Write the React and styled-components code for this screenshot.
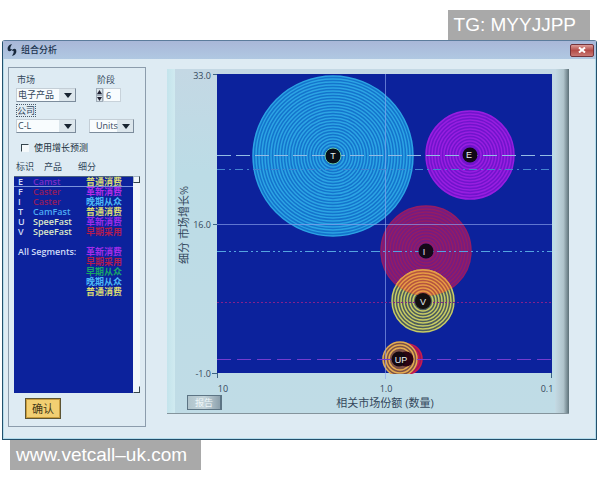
import { useState } from 'react';
import styled, { createGlobalStyle } from 'styled-components';

const sans = `'Open Sans', 'Noto Sans CJK SC', sans-serif`;

const rows = [
  { id: 'E', name: 'Camst', nameColor: '#7a2bc8', segment: '普通消费', color: '#dcdc74' },
  { id: 'F', name: 'Caster', nameColor: '#941c5c', segment: '革新消费', color: '#b42ce8' },
  { id: 'I', name: 'Caster', nameColor: '#941c5c', segment: '晚期从众', color: '#4cb8f4' },
  { id: 'T', name: 'CamFast', nameColor: '#4cacf4', segment: '普通消费', color: '#dcdc74' },
  { id: 'U', name: 'SpeeFast', nameColor: '#dce8c8', segment: '革新消费', color: '#9c2ce8' },
  { id: 'V', name: 'SpeeFast', nameColor: '#dce8c8', segment: '早期采用', color: '#b01c50' },
];

const segments = [
  { label: '革新消费', color: '#a42ce8' },
  { label: '早期采用', color: '#b01c50' },
  { label: '早期从众', color: '#18a868' },
  { label: '晚期从众', color: '#4cb8f4' },
  { label: '普通消费', color: '#dcdc74' },
];

const bubbles = [
  { id: 'T', x: 157, y: 87, r: 80, step: 3, fill: '#1474cc', ring: '#2ca4e4' },
  { id: 'E', x: 294, y: 86, r: 44, step: 3, fill: '#7014cc', ring: '#981ee0' },
  { id: 'I', x: 250, y: 182, r: 45, step: 3, fill: '#741c84', ring: '#941c64' },
  { id: 'V', x: 247, y: 232, r: 31, step: 3, fill: '#4c5c5c', ring: '#c8cc64' },
  { id: 'P', x: 231, y: 290, r: 15, step: 3, fill: '#9c1460', ring: '#c81c4c' },
  { id: 'U', x: 224, y: 290, r: 17, step: 3, fill: '#7c5048', ring: '#e4ac50' },
];

const Bubble = ({ x, y, r, step, fill, ring }) => {
  const radii = [];
  for (let i = r; i > 8; i -= step) radii.push(i);
  return (
    <g>
      <circle cx={x} cy={y} r={r} fill={fill} />
      {radii.map((radius) => (
        <circle key={radius} cx={x} cy={y} r={radius} fill="none" stroke={ring} strokeWidth="1.5" />
      ))}
    </g>
  );
};

const Chart = () => (
  <ChartSvg viewBox="0 0 379 326" role="img" aria-label="细分市场增长%">
    <defs>
      <clipPath id="plot">
        <rect x="41" y="5" width="335" height="300" />
      </clipPath>
      <clipPath id="overlap">
        <circle cx="250" cy="182" r="45" />
      </clipPath>
    </defs>
    <rect x="41" y="5" width="335" height="299" fill="#0c229c" />
    <g clipPath="url(#plot)">
      {bubbles.map((b) => (
        <Bubble key={b.id} {...b} />
      ))}
      <g clipPath="url(#overlap)">
        <Bubble x={247} y={232} r={31} step={3} fill="#b45440" ring="#e89c44" />
      </g>
    </g>
    <g fill="none" strokeWidth="1">
      <path d="M41 155.5H376M209.5 5V310" stroke="#8ca4ec" opacity="0.65" />
      <path d="M41 86.5H376" stroke="#94bce4" strokeDasharray="14 5" />
      <path d="M41 100.5H376" stroke="#4484d0" strokeDasharray="8 4 2 4" />
      <path d="M41 182.5H376" stroke="#54a4e0" strokeDasharray="9 3 2 3 2 3" />
      <path d="M41 233.5H376" stroke="#84208c" strokeDasharray="2 2" />
      <path d="M41 290.5H376" stroke="#743cd0" strokeDasharray="14 6" />
      <path d="M37 5.5H41M37 155.5H41M36 304.5H42M41.5 304V309M375.5 304V309" stroke="#3c6484" />
    </g>
    <circle cx="157" cy="87" r="8" fill="#081018" stroke="#60c8b0" />
    <circle cx="294" cy="86" r="7.5" fill="#100818" />
    <circle cx="250" cy="182" r="7.5" fill="#140818" />
    <circle cx="247" cy="232" r="8" fill="#141010" />
    <circle cx="230" cy="290" r="7.5" fill="#2c0414" />
    <circle cx="223" cy="290" r="7.5" fill="#140810" />
    <BubbleText x="157" y="90">T</BubbleText>
    <BubbleText x="293" y="89">E</BubbleText>
    <BubbleText x="248" y="186">I</BubbleText>
    <BubbleText x="247" y="236">V</BubbleText>
    <BubbleText x="225" y="294">UP</BubbleText>
    <TickText x="35" y="10" textAnchor="end">33.0</TickText>
    <TickText x="35" y="159" textAnchor="end">16.0</TickText>
    <TickText x="35" y="308" textAnchor="end">-1.0</TickText>
    <TickText x="47" y="323" textAnchor="middle">10</TickText>
    <TickText x="210" y="323" textAnchor="middle">1.0</TickText>
    <TickText x="371" y="323" textAnchor="middle">0.1</TickText>
    <AxisText transform="translate(12 156) rotate(-90)">细分 市场增长%</AxisText>
  </ChartSvg>
);

const App = () => {
  const [market, setMarket] = useState('电子产品');
  const [company, setCompany] = useState('C-L');
  const [unit, setUnit] = useState('Units');
  const [period, setPeriod] = useState(6);
  const [forecast, setForecast] = useState(false);

  return (
    <>
      <GlobalStyle />
      <Page>
        <Tag $end>TG: MYYJJPP</Tag>
        <Window>
          <TitleBar>
            <Logo viewBox="0 0 10 12" aria-hidden="true">
              <path d="M5 0C1 1 0 4 1 6.500C2 8 5 7 5 5C3 6 2.500 4 5 0Z" fill="#18283c" />
              <path d="M5 12C9 11 10 8 9 5.500C8 4 5 5 5 7C7 6 7.500 8 5 12Z" fill="#18283c" />
            </Logo>
            <Title>组合分析</Title>
            <CloseButton aria-label="关闭">
              <svg width="8" height="6" viewBox="0 0 8 6" aria-hidden="true">
                <path d="M1 0.500L7 5.500M7 0.500L1 5.500" stroke="#fff" strokeWidth="2" />
              </svg>
            </CloseButton>
          </TitleBar>

          <Body>
            <SidePanel>
              <Fields>
                <Field>
                  <Label htmlFor="market">市场</Label>
                  <SelectBox>
                    <Select id="market" value={market} onChange={(e) => setMarket(e.target.value)}>
                      <option>电子产品</option>
                    </Select>
                  </SelectBox>
                </Field>
                <Field $indent>
                  <Label htmlFor="period">阶段</Label>
                  <Stepper>
                    <StepButtons>
                      <StepButton aria-label="增加" onClick={() => setPeriod(Number(period) + 1)}>
                        <svg width="5" height="4" aria-hidden="true"><path d="M0 4L2.500 0L5 4Z" fill="#223" /></svg>
                      </StepButton>
                      <StepButton aria-label="减少" onClick={() => setPeriod(Number(period) - 1)}>
                        <svg width="5" height="4" aria-hidden="true"><path d="M0 0L2.500 4L5 0Z" fill="#223" /></svg>
                      </StepButton>
                    </StepButtons>
                    <PeriodInput id="period" value={period} onChange={(e) => setPeriod(e.target.value)} />
                  </Stepper>
                </Field>
                <Field>
                  <Label htmlFor="company" $focused>公司</Label>
                  <SelectBox>
                    <Select id="company" value={company} onChange={(e) => setCompany(e.target.value)}>
                      <option>C-L</option>
                    </Select>
                  </SelectBox>
                </Field>
                <Field $bottom>
                  <SelectBox>
                    <Select
                      aria-label="Units"
                      $inset
                      value={unit}
                      onChange={(e) => setUnit(e.target.value)}
                    >
                      <option>Units</option>
                    </Select>
                  </SelectBox>
                </Field>
              </Fields>

              <CheckLabel>
                <Checkbox
                  type="checkbox"
                  checked={forecast}
                  onChange={(e) => setForecast(e.target.checked)}
                />
                使用增长预测
              </CheckLabel>

              <ListArea>
                <ListMain>
                  <Table>
                    <colgroup>
                      <IdCol />
                      <NameCol />
                      <col />
                    </colgroup>
                    <thead>
                      <tr>
                        <HeadCell>标识</HeadCell>
                        <HeadCell $pad={11}>产品</HeadCell>
                        <HeadCell>细分</HeadCell>
                      </tr>
                    </thead>
                    <TableBody>
                      {rows.map((row, i) => (
                        <Row key={row.id} $selected={i === 0}>
                          <Cell $pad={4}>{row.id}</Cell>
                          <Cell $color={row.nameColor}>{row.name}</Cell>
                          <Cell $pad={10} $color={row.color}>{row.segment}</Cell>
                        </Row>
                      ))}
                      <Row>
                        <Cell colSpan={3} />
                      </Row>
                      {segments.map((s, i) => (
                        <Row key={s.label}>
                          <Cell colSpan={2} $pad={4}>{i === 0 ? 'All Segments:' : ''}</Cell>
                          <Cell $pad={10} $color={s.color}>{s.label}</Cell>
                        </Row>
                      ))}
                    </TableBody>
                  </Table>
                  <ListFill />
                </ListMain>
                <ScrollTrack>
                  <ScrollEnd />
                  <ScrollEnd $last />
                </ScrollTrack>
              </ListArea>

              <ConfirmButton>确认</ConfirmButton>
            </SidePanel>

            <ChartPanel>
              <Chart />
              <ChartFooter>
                <ReportButton>报告</ReportButton>
                <AxisTitle>相关市场份额 (数量)</AxisTitle>
              </ChartFooter>
            </ChartPanel>
          </Body>
        </Window>
        <Tag>www.vetcall–uk.com</Tag>
      </Page>
    </>
  );
};

const GlobalStyle = createGlobalStyle`
  * {
    box-sizing: border-box;
  }

  body {
    margin: 0;
    background: #fff;
    font-family: ${sans};
    color: #34485c;
  }

  button, input, select {
    font-family: inherit;
    color: inherit;
    margin: 0;
  }
`;

const Page = styled.main`
  display: flex;
  flex-direction: column;
  padding: 10px 0;
`;

const Tag = styled.div`
  align-self: ${props => props.$end ? 'flex-end' : 'flex-start'};
  margin: 0 10px;
  padding: 0 14px 0 6px;
  background: #a9a9a9;
  color: #fff;
  font-family: 'Liberation Sans', sans-serif;
  font-size: 19px;
  line-height: 30px;
`;

const Window = styled.section`
  margin: 0 3px 0 2px;
  border: 1px solid #24506c;
  border-top-color: #5c7c9c;
  border-radius: 3px 3px 0 0;
  background: #deebf3;
  box-shadow: inset 0 0 0 1px #b4dcec;
`;

const TitleBar = styled.header`
  display: flex;
  align-items: center;
  height: 18px;
  padding: 0 2px 0 4px;
  background: linear-gradient(#a9b7d8, #b0c8e2);
`;

const Logo = styled.svg`
  width: 10px;
  height: 12px;
`;

const Title = styled.h1`
  flex: 1;
  margin: 0 0 0 4px;
  font-size: 9px;
  line-height: 16px;
  font-weight: 500;
  color: #203450;
`;

const CloseButton = styled.button`
  display: flex;
  align-items: center;
  justify-content: center;
  width: 24px;
  height: 13px;
  padding: 0;
  border: 1px solid #74343c;
  border-radius: 2px;
  background: linear-gradient(#dc9c98, #b44c48 50%, #c87874);
`;

const Body = styled.div`
  display: flex;
  align-items: flex-start;
  gap: 21px;
  padding: 8px 27px 12px 5px;
`;

const SidePanel = styled.div`
  flex: none;
  width: 138px;
  padding: 5px 5px 7px;
  border: 1px solid #8c9cac;
`;

const Fields = styled.div`
  display: grid;
  grid-template-columns: 60px 45px;
  column-gap: 13px;
  row-gap: 2px;
  padding-left: 2px;
`;

const Field = styled.div`
  display: flex;
  flex-direction: column;
  justify-content: ${props => props.$bottom ? 'flex-end' : 'flex-start'};
  align-items: flex-start;
  padding-left: ${props => props.$indent ? 7 : 0}px;
`;

const Label = styled.label`
  margin-bottom: 2px;
  padding: 0 1px;
  font-size: 9px;
  line-height: 13px;
  outline: ${props => props.$focused ? '1px dotted #4c5c6c' : 'none'};
  outline-offset: -1px;
`;

const SelectBox = styled.div`
  display: flex;
  position: relative;
  width: 100%;

  &::after {
    content: '';
    position: absolute;
    right: 4px;
    top: 5px;
    border: 4px solid transparent;
    border-top: 5px solid #182430;
    border-bottom: 0;
    pointer-events: none;
  }
`;

const Select = styled.select`
  appearance: none;
  width: 100%;
  height: 14px;
  padding: 0 0 0 ${props => props.$inset ? 6 : 1}px;
  border: 1px solid #c4ced6;
  border-right-color: #7c8c9c;
  border-bottom-color: #7c8c9c;
  border-radius: 0;
  background: linear-gradient(90deg, #f8fcfe calc(100% - 16px), #dce6ec calc(100% - 16px));
  font-size: 9px;
  line-height: 12px;
`;

const Stepper = styled.div`
  display: flex;
  height: 14px;
`;

const StepButtons = styled.div`
  display: flex;
  flex-direction: column;
`;

const StepButton = styled.button`
  display: flex;
  align-items: center;
  justify-content: center;
  width: 7px;
  height: 7px;
  padding: 0;
  border: 1px solid #a0acb8;
  background: #dce6ec;
`;

const PeriodInput = styled.input`
  width: 18px;
  padding: 0 2px;
  border: 1px solid #c8d2da;
  background: #f8fcfe;
  font-size: 9px;
`;

const CheckLabel = styled.label`
  display: flex;
  align-items: center;
  gap: 5px;
  margin-top: 8px;
  padding-left: 7px;
  font-size: 9px;
  line-height: 13px;
  color: #203040;
`;

const Checkbox = styled.input`
  appearance: none;
  width: 8px;
  height: 8px;
  border: 1px solid #f4f8fa;
  border-top-color: #34444c;
  border-left-color: #34444c;
  background: #f4f8fa;

  &:checked {
    background: #34485c;
  }
`;

const ListArea = styled.div`
  display: flex;
  height: 232px;
  margin-top: 7px;
`;

const ListMain = styled.div`
  flex: 1;
  display: flex;
  flex-direction: column;
`;

const Table = styled.table`
  width: 100%;
  table-layout: fixed;
  border-collapse: collapse;
  font-size: 9px;
  line-height: 10px;
`;

const IdCol = styled.col`
  width: 19px;
`;

const NameCol = styled.col`
  width: 43px;
`;

const HeadCell = styled.th`
  height: 15px;
  padding: 0 0 2px ${props => props.$pad || 2}px;
  font-weight: 400;
  text-align: left;
  white-space: nowrap;
`;

const TableBody = styled.tbody`
  background: #0c229c;
  border-top: 1px solid #4c6480;
`;

const Row = styled.tr`
  height: 10px;
  box-shadow: ${props => props.$selected ? 'inset 0 -1px #7c94dc' : 'none'};
`;

const Cell = styled.td`
  height: 10px;
  padding: 0 0 0 ${props => props.$pad || 0}px;
  color: ${props => props.$color || '#d0dcf8'};
  font-weight: 600;
  white-space: nowrap;
`;

const ListFill = styled.div`
  flex: 1;
  background: #0c229c;
`;

const ScrollTrack = styled.div`
  display: flex;
  flex-direction: column;
  justify-content: space-between;
  width: 7px;
  margin-top: 15px;
  background: #f0f6fa;
`;

const ScrollEnd = styled.span`
  height: 7px;
  border: 1px solid ${props => props.$last ? '#f0f6fa' : '#a8b8c4'};
  border-right-color: #34444c;
  border-bottom-color: #34444c;
`;

const ConfirmButton = styled.button`
  display: block;
  width: 36px;
  height: 21px;
  margin: 5px 0 0 11px;
  padding: 0;
  border: 1px solid #5c5434;
  box-shadow: inset 0 0 0 1px #c89c3c;
  background: #f2cf72;
  font-size: 11px;
  line-height: 16px;
  color: #443818;
`;

const ChartPanel = styled.div`
  flex: 1;
  min-width: 0;
  margin-top: 2px;
  padding: 0 14px 3px 9px;
  border-bottom: 1px solid #84949c;
  background:
    linear-gradient(90deg, #c4e4ec, #d0eaf0) left / 8px 100% no-repeat,
    linear-gradient(90deg, #c4dae4, #b0c4cc 60%, #5c7078) right / 14px 100% no-repeat,
    linear-gradient(#c4d8e4, #bcdce6 30%, #c0dce6);
`;

const ChartSvg = styled.svg`
  display: block;
  width: 100%;
  overflow: visible;
`;

const TickText = styled.text`
  font-family: ${sans};
  font-size: 9px;
  fill: #34485c;
`;

const AxisText = styled.text`
  font-family: ${sans};
  font-size: 11px;
  text-anchor: middle;
  fill: #34485c;
`;

const BubbleText = styled.text`
  font-family: 'Liberation Sans', sans-serif;
  font-size: 9px;
  text-anchor: middle;
  fill: #e8f0f4;
`;

const ChartFooter = styled.div`
  display: flex;
  align-items: center;
  padding: 0 7px 0 11px;
`;

const ReportButton = styled.button`
  width: 35px;
  height: 15px;
  padding: 0;
  border: 1px solid #5c7484;
  border-right-width: 2px;
  background: linear-gradient(90deg, #b0c4cc, #c4d4da 50%, #8ca0ac);
  font-size: 9px;
  line-height: 12px;
  color: #eef6f8;
`;

const AxisTitle = styled.span`
  flex: 1;
  text-align: center;
  font-size: 11px;
  line-height: 15px;
`;

export default App;
